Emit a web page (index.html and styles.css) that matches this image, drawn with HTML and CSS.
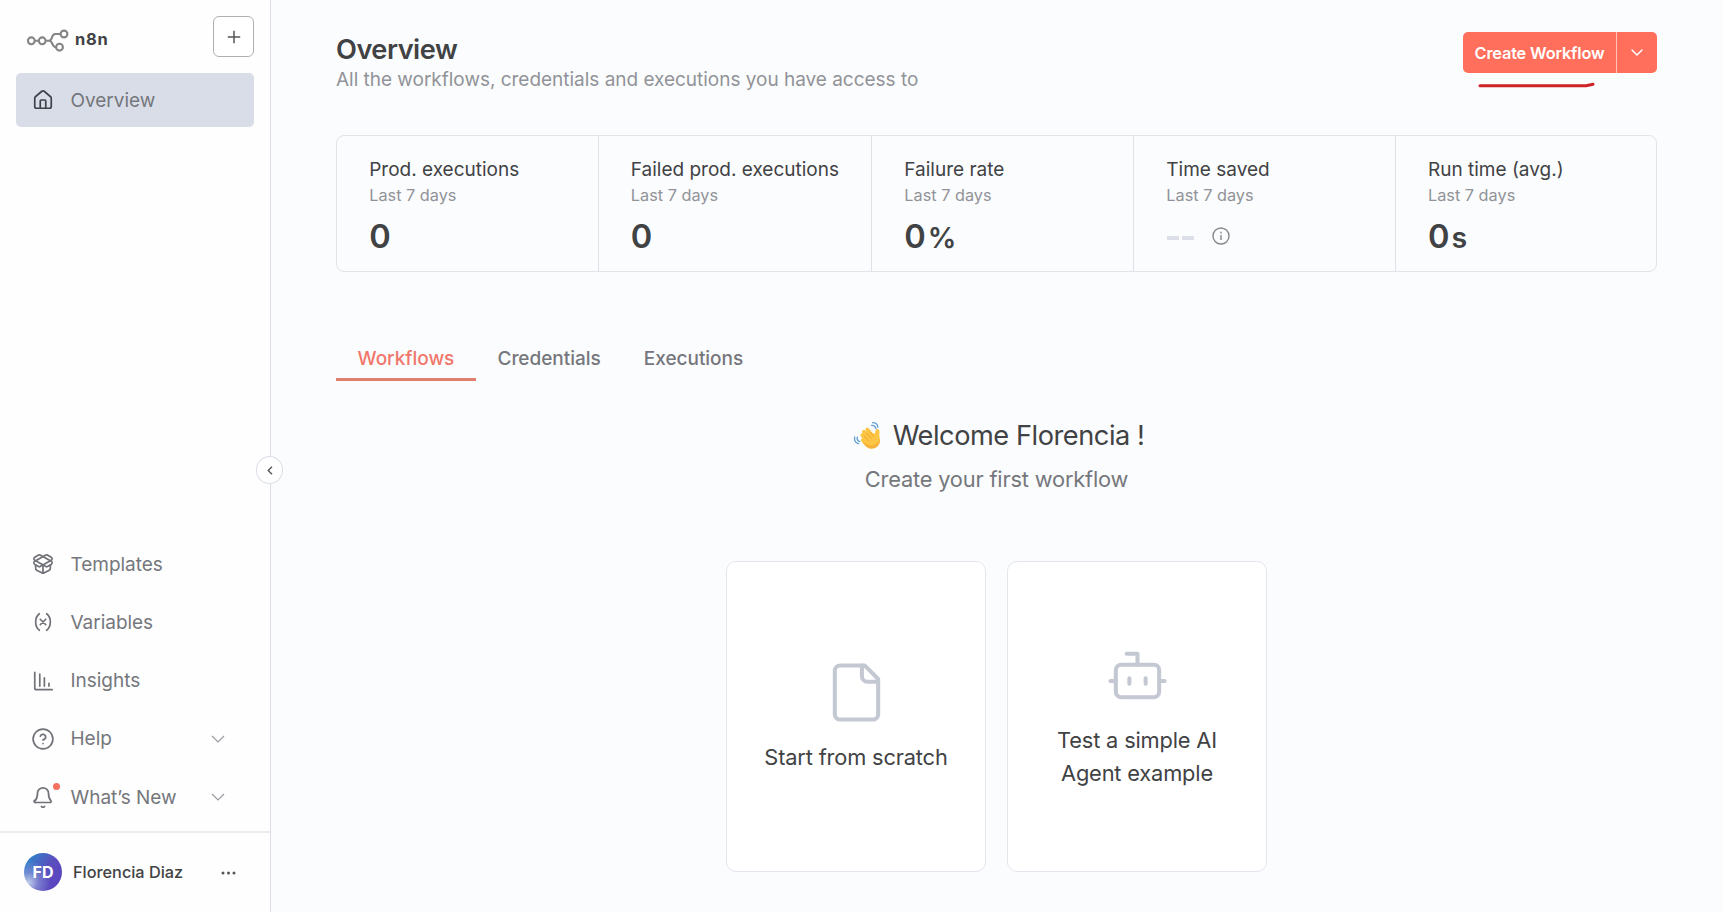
FILE: index.html
```html
<!DOCTYPE html>
<html lang="en">
<head>
<meta charset="utf-8">
<title>n8n - Overview</title>
<link rel="stylesheet" href="styles.css">
</head>
<body>
<div class="app">
  <aside class="sidebar">
    <header class="brand">
      <svg class="brand-mark" width="42" height="23" viewBox="0 0 42 23" fill="none" stroke="#858585" stroke-width="2.1"><circle cx="4.3" cy="11.8" r="3.4"/><circle cx="15.2" cy="11.8" r="3.4"/><circle cx="37" cy="5" r="3.4"/><circle cx="32.5" cy="18.2" r="3.4"/><path d="M7.7 11.8h4.1M18.6 11.8H22c4.300 0 1.500-6.800 6.500-6.800h5.100M22 11.800c4.200 0 2.500 6.400 7.100 6.400"/></svg>
      <span class="brand-name">n8n</span>
      <button class="add-btn" aria-label="Add"><svg width="14" height="14" viewBox="0 0 14 14" fill="none" stroke="#555" stroke-width="1.500"><path d="M7 .8v12.400M.8 7h12.400"/></svg></button>
    </header>
    <a class="item active"><svg class="ico" viewBox="0 0 24 24"><path d="M15 21v-8a1 1 0 0 0-1-1h-4a1 1 0 0 0-1 1v8"/><path d="M3 10a2 2 0 0 1 .709-1.528l7-5.999a2 2 0 0 1 2.582 0l7 5.999A2 2 0 0 1 21 10v9a2 2 0 0 1-2 2H5a2 2 0 0 1-2-2z"/></svg><span>Overview</span></a>
    <nav class="lower">
      <a class="item"><svg class="ico" viewBox="0 0 24 24"><path d="M12 22v-9"/><path d="M15.170 2.210a1.670 1.670 0 0 1 1.630 0L21 4.570a1.930 1.930 0 0 1 0 3.360L8.820 14.790a1.655 1.655 0 0 1-1.640 0L3 12.430a1.930 1.930 0 0 1 0-3.360z"/><path d="M20 13v3.870a2.060 2.060 0 0 1-1.110 1.830l-6 3.080a1.930 1.930 0 0 1-1.780 0l-6-3.080A2.060 2.060 0 0 1 4 16.870V13"/><path d="M21 12.430a1.930 1.930 0 0 0 0-3.360L8.830 2.200a1.640 1.640 0 0 0-1.630 0L3 4.570a1.930 1.930 0 0 0 0 3.360l12.180 6.860a1.636 1.636 0 0 0 1.630 0z"/></svg><span>Templates</span></a>
      <a class="item"><svg class="ico" viewBox="0 0 24 24"><path d="M8 21s-4-3-4-9 4-9 4-9"/><path d="M16 3s4 3 4 9-4 9-4 9"/><path d="m15 9-6 6M9 9l6 6"/></svg><span>Variables</span></a>
      <a class="item"><svg class="ico" viewBox="0 0 24 24"><path d="M3 2.500V19.500a2 2 0 0 0 2 2h17"/><path d="M8.500 4.500v13M13.500 8.500v9M18.500 14.500v3"/></svg><span>Insights</span></a>
      <a class="item"><svg class="ico" viewBox="0 0 24 24"><circle cx="12" cy="12" r="10.800"/><path d="M9.090 9a3 3 0 0 1 5.830 1c0 2-3 3-3 3M12 17h.01"/></svg><span>Help</span><svg class="chev" viewBox="0 0 14 8"><path d="m1 1 6 6 6-6"/></svg></a>
      <a class="item"><span class="bell"><svg class="ico" viewBox="0 0 24 24"><path d="M10.270 22.300a2 2 0 0 0 3.460 0"/><path d="M3.260 15.330A1 1 0 0 0 4 18h16a1 1 0 0 0 .740-1.670C19.410 14.960 18 13.500 18 8A6 6 0 0 0 6 8c0 5.500-1.410 6.960-2.740 8.330"/></svg><i class="dot"></i></span><span>What’s New</span><svg class="chev" viewBox="0 0 14 8"><path d="m1 1 6 6 6-6"/></svg></a>
    </nav>
    <footer class="user">
      <span class="avatar">FD</span>
      <span class="user-name">Florencia Diaz</span>
      <svg class="more" width="15" height="4" viewBox="0 0 15 4" fill="#555"><circle cx="2" cy="2" r="1.500"/><circle cx="7.500" cy="2" r="1.500"/><circle cx="13" cy="2" r="1.500"/></svg>
    </footer>
    <button class="collapse" aria-label="Collapse"><svg width="6" height="9" viewBox="0 0 6 9" fill="none" stroke="#555" stroke-width="1.400"><path d="M5 .8 1.200 4.500 5 8.200"/></svg></button>
  </aside>

  <main class="main">
    <div class="head">
      <div>
        <h1 class="title">Overview</h1>
        <p class="subtitle">All the workflows, credentials and executions you have access to</p>
      </div>
      <div class="create">
        <button class="create-main">Create Workflow</button>
        <button class="create-more" aria-label="More"><svg width="12" height="8" viewBox="0 0 12 8" fill="none" stroke="#fff" stroke-width="1.500" stroke-linecap="round" stroke-linejoin="round"><path d="m1 1 5 5 5-5"/></svg></button>
        <svg class="marker" width="117" height="6" viewBox="0 0 117 6" fill="none" stroke="#cf2227" stroke-width="3" stroke-linecap="round" stroke-linejoin="round"><path d="M2 3.700H108l7-1.400"/></svg>
      </div>
    </div>

    <section class="stats">
      <div class="stat"><b>Prod. executions</b><small>Last 7 days</small><p class="num">0</p></div>
      <div class="stat"><b>Failed prod. executions</b><small>Last 7 days</small><p class="num">0</p></div>
      <div class="stat"><b>Failure rate</b><small>Last 7 days</small><p class="num">0<em>%</em></p></div>
      <div class="stat"><b>Time saved</b><small>Last 7 days</small><p class="num empty"><span class="dashes"><i></i><i></i></span><svg width="18" height="18" viewBox="0 0 18 18" fill="none" stroke="#85888d" stroke-width="1.400"><circle cx="9" cy="9" r="8"/><path d="M9 8v5M9 4.800v1.700"/></svg></p></div>
      <div class="stat"><b>Run time (avg.)</b><small>Last 7 days</small><p class="num">0<em>s</em></p></div>
    </section>

    <nav class="tabs">
      <a class="tab on">Workflows</a><a class="tab">Credentials</a><a class="tab">Executions</a>
    </nav>

    <section class="welcome">
      <h2 class="hello">
        <svg class="wave" width="28" height="29" viewBox="0 0 28 29" fill="none"><path d="M9.200 14.300 16 22M10.800 10.800l8 9M14.300 8.500l6.700 8.500" stroke="#fcc544" stroke-width="3.700" stroke-linecap="round"/><path d="M9.500 16.500 13 11l9 1.500c.6-2.500.2-3.400 1.500-4.200 1.600-.9 2.800.4 3 2.200.2 2.400-.6 3.400.2 6.500 1 4.300-.6 8-4 9.800-3.500 1.800-7 1.200-9.900-1.400L8.700 20.800c-1.600-1.600-.9-3.400.8-2.900z" fill="#fcc544"/><path d="M9.300 21 13 25c2.900 2.500 6.300 3 9.700 1.200 3-1.700 4.500-4.700 4.200-8.200-1.700 6.300-8.700 8.200-13.200 5z" fill="#f6b03a"/><path d="m11.300 15.200 4.400 4.700M13.500 12.200l4.700 5.300M16.800 10.800l3.500 4.400" stroke="#e59f2a" stroke-width=".75" stroke-linecap="round"/><path d="M18.500 4.300c2.600-.2 4 1 4.500 3.400M19.600 1.700c3.200 0 4.900 1.500 5.300 4.400M4.300 16.200c-.6 2.300.3 3.700 2.500 4.400M1.700 16c-.7 3.600.7 5.900 4 6.700" stroke="#5f9fd0" stroke-width="1.300" stroke-linecap="round"/></svg>
        <span>Welcome Florencia !</span>
      </h2>
      <p class="prompt">Create your first workflow</p>
      <div class="cards">
        <div class="card"><svg class="big" viewBox="0 0 24 24"><path d="M15 2H6a2 2 0 0 0-2 2v16a2 2 0 0 0 2 2h12a2 2 0 0 0 2-2V7Z"/><path d="M14 2v4a2 2 0 0 0 2 2h4"/></svg><span>Start from scratch</span></div>
        <div class="card"><svg class="big" viewBox="0 0 24 24"><path d="M12 8V4H8"/><rect x="4" y="8" width="16" height="12" rx="2"/><path d="M2 14h2M20 14h2M15 13v2M9 13v2"/></svg><span>Test a simple AI<br>Agent example</span></div>
      </div>
    </section>
  </main>
</div>
</body>
</html>
```
FILE: styles.css
```css
* { box-sizing: border-box; margin: 0; padding: 0; }
body { font-family: Inter, "Liberation Sans", sans-serif; background: #fbfcfe; color: #414244; }
button { font: inherit; border: 0; background: none; display: flex; align-items: center; justify-content: center; }
svg { flex: none; display: block; }
.app { display: flex; width: 1722px; height: 912px; overflow: hidden; }

.sidebar { position: relative; width: 271px; flex: none; background: #fefefe; border-right: 1px solid #dcdfe8; display: flex; flex-direction: column; }
.brand { display: flex; align-items: center; height: 57px; margin-bottom: 16px; padding: 16px 16px 0 27px; }
.brand-mark { margin-top: 7px; }
.brand-name { margin: 4px 0 0 6px; font-size: 16.500px; line-height: 20px; font-weight: 700; letter-spacing: .7px; }
.add-btn { width: 41px; height: 41px; margin-left: auto; border: 1px solid #aeb0b5; border-radius: 6px; background: #fff; }
.item { display: flex; align-items: center; height: 54px; margin: 0 16px; padding-left: 16px; border-radius: 5px; font-size: 19px; letter-spacing: -.03px; color: #75777c; }
.item > span:not(.bell) { margin-left: 16.500px; }
.ico { width: 22px; height: 22px; fill: none; stroke: #707278; stroke-width: 1.850; stroke-linecap: round; stroke-linejoin: round; }
.active { background: #d9dde8; }
.active .ico { stroke: #3f4249; }
.chev { width: 14px; height: 8px; margin-left: auto; margin-right: 29px; fill: none; stroke: #9a9ca2; stroke-width: 1.200; }
.lower { margin-top: auto; display: flex; flex-direction: column; gap: 4.200px; padding-bottom: 7px; }
.bell { position: relative; }
.dot { position: absolute; left: 21px; top: -3px; width: 7px; height: 7px; border-radius: 50%; background: #f4705f; }
.user { display: flex; align-items: center; height: 81px; padding: 0 34px 2px 24px; border-top: 2px solid #ececf0; }
.avatar { display: flex; align-items: center; justify-content: center; width: 38px; height: 38px; border-radius: 50%; color: #fff; font-size: 16px; font-weight: 700; background: radial-gradient(circle at 12% 78%, rgba(205,215,238,.9) 0, rgba(150,165,220,.55) 22%, rgba(90,80,190,0) 50%), linear-gradient(125deg, #2a86cc 8%, #5a4fbd 52%, #5b3fc0 100%); }
.user-name { margin-left: 11px; padding-top: 1px; font-size: 16.300px; font-weight: 500; }
.more { margin-left: auto; margin-top: 2px; }
.collapse { position: absolute; left: 256px; top: 456px; width: 27px; height: 28px; border: 1px solid #dcdfe8; border-radius: 50%; background: #fff; }

.main { flex: 1; padding: 32px 65px 0; }
.head { display: flex; justify-content: space-between; height: 103.400px; }
.title { padding-top: 1px; font-size: 27.200px; line-height: 34px; font-weight: 600; letter-spacing: -.5px; }
.subtitle { font-size: 19px; line-height: 26px; letter-spacing: -.02px; color: #919398; }
.create { position: relative; display: flex; width: 194px; height: 41px; border-radius: 5px; background: #ff6f5c; color: #fff; }
.create-main { width: 154px; color: #fff; font-size: 16.300px; font-weight: 600; letter-spacing: -.15px; border-right: 1px solid #ffc2ba; }
.create-more { flex: 1; }
.marker { position: absolute; left: 15px; top: 50px; }

.stats { display: grid; grid-template-columns: 261.600px 273.500px 262px 261.700px 1fr; height: 137px; border: 1px solid #e2e4eb; border-radius: 8px; }
.stat { display: flex; flex-direction: column; padding: 21px 0 0 32.200px; border-right: 1px solid #dfe1e8; white-space: nowrap; }
.stat:last-child { border-right: 0; }
.stat b { font-size: 19px; line-height: 26px; font-weight: 400; }
.stat small { font-size: 16.300px; line-height: 24px; color: #919398; }
.num { display: flex; align-items: baseline; height: 44px; margin-top: 7px; font-size: 32.600px; line-height: 44px; font-weight: 600; }
.num em { margin-left: 2px; font-size: 28.500px; font-style: normal; }
.empty { align-items: center; gap: 18px; }
.dashes { display: flex; gap: 3px; margin: 4px 0 0 1px; }
.dashes i { width: 12px; height: 4px; background: #dcdfe8; }

.tabs { display: flex; height: 48px; margin-top: 60.600px; align-items: flex-end; }
.tab { height: 48px; padding: 14px 21.600px 0; border-bottom: 3px solid transparent; font-size: 19px; line-height: 24px; font-weight: 500; letter-spacing: -.03px; color: #75777c; }
.on { color: #f0776a; border-color: #df7f70; }

.welcome { display: flex; flex-direction: column; align-items: center; margin-top: 36px; }
.hello { display: flex; align-items: center; gap: 12px; height: 38px; padding-left: 4px; font-size: 27.200px; font-weight: 400; letter-spacing: -.46px; }
.prompt { margin-top: 7px; font-size: 21.800px; line-height: 34px; letter-spacing: -.17px; color: #75777c; }
.cards { display: flex; gap: 21px; margin-top: 65px; }
.card { display: flex; flex-direction: column; align-items: center; justify-content: center; gap: 16px; width: 260px; height: 311px; border: 1px solid #e4e6ed; border-radius: 10px; background: #fff; font-size: 21.800px; line-height: 32.500px; letter-spacing: -.16px; text-align: center; }
.big { width: 65px; height: 65px; fill: none; stroke: #c4c8d3; stroke-width: 1.500; stroke-linecap: round; stroke-linejoin: round; }
```
